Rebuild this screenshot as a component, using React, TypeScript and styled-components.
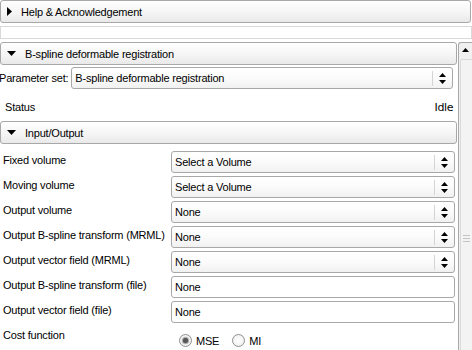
import React from 'react';
import styled, { createGlobalStyle } from 'styled-components';

const GlobalStyle = createGlobalStyle`
  html, body {
    margin: 0;
    padding: 0;
    background: #ffffff;
  }
  body {
    font-family: 'Liberation Sans', Arial, sans-serif;
    font-size: 11px;
    letter-spacing: -0.2px;
    color: #000000;
  }
`;

const Page = styled.div`
  width: 472px;
  height: 350px;
  overflow: hidden;
  background: #ffffff;
  display: flex;
  flex-direction: column;
`;

const CollapsibleButton = styled.div<{ $width?: number }>`
  box-sizing: border-box;
  width: ${(p) => (p.$width ? `${p.$width}px` : '100%')};
  height: 23px;
  border: 1px solid #a8a8a8;
  border-radius: 3px;
  background: linear-gradient(#ffffff, #f4f4f4 60%, #e9e9e9);
  display: flex;
  align-items: center;
  gap: 9px;
  padding-left: 6px;
  font-size: 11px;
`;

const EmptyStrip = styled.div`
  box-sizing: border-box;
  margin-top: 3px;
  width: 472px;
  height: 13px;
  border: 1px solid #d9d9d9;
  background: #ffffff;
`;

const Main = styled.div`
  margin-top: 3px;
  display: flex;
  flex: 1;
  min-height: 0;
`;

const Content = styled.div`
  width: 458px;
  display: flex;
  flex-direction: column;
`;

const Scrollbar = styled.div`
  box-sizing: border-box;
  width: 14px;
  border: 1px solid #a8a8a8;
  border-right: none;
  border-bottom: none;
  border-radius: 3px 0 0 0;
  background: #f0f0f0;
  display: flex;
  flex-direction: column;
`;

const ScrollButton = styled.div`
  height: 14px;
  display: flex;
  align-items: center;
  justify-content: center;
`;

const ScrollThumb = styled.div`
  flex: 1;
  margin: 2px 0 0 1px;
  border-left: 1px solid #dadada;
  border-top: 1px solid #dadada;
  border-radius: 2px 0 0 0;
  background: #f3f3f3;
  display: flex;
  justify-content: center;
  padding-top: 175px;
`;

const Grip = styled.div`
  width: 7px;
  height: 7px;
  background: repeating-linear-gradient(#c4c4c4 0 1px, transparent 1px 3px);
`;

const ParamRow = styled.div`
  margin-top: 2px;
  display: flex;
  align-items: center;
  gap: 3px;
`;

const ParamLabel = styled.span`
  margin-left: -1px;
  white-space: nowrap;
`;

const Combo = styled.div<{ $width: number }>`
  box-sizing: border-box;
  width: ${(p) => p.$width}px;
  height: 22px;
  border: 1px solid #a8a8a8;
  border-radius: 3px;
  background: linear-gradient(#ffffff, #fbfbfb 50%, #f1f1f1);
  display: flex;
  align-items: center;
  padding-left: 3px;
`;

const ComboText = styled.span`
  flex: 1;
  white-space: nowrap;
`;

const ComboButton = styled.div`
  width: 19px;
  height: 15px;
  border-left: 1px solid #d4d4d4;
  display: flex;
  align-items: center;
  justify-content: center;
`;

const LineEdit = styled.div`
  box-sizing: border-box;
  width: 284px;
  height: 22px;
  border: 1px solid #a8a8a8;
  border-radius: 3px;
  background: #ffffff;
  display: flex;
  align-items: center;
  padding-left: 3px;
`;

const StatusRow = styled.div`
  box-sizing: border-box;
  height: 32px;
  display: flex;
  align-items: center;
  justify-content: space-between;
  padding: 4px 5px 0 5px;
`;

const IdleText = styled.span`
  font-family: 'DejaVu Sans', sans-serif;
  font-size: 11px;
  letter-spacing: -0.4px;
`;

const Form = styled.div`
  margin-top: 7px;
  display: grid;
  grid-template-columns: 171px 284px;
  grid-auto-rows: 22px;
  row-gap: 3px;
  align-items: center;
`;

const FieldLabel = styled.span`
  padding-left: 3px;
  white-space: nowrap;
  align-self: start;
  margin-top: 3px;
`;

const RadioGroup = styled.div`
  display: flex;
  align-items: center;
  padding-left: 8px;
  margin-top: 7px;
  gap: 4px;
`;

const RadioLabel = styled.span`
  margin-right: 9px;
`;

const RadioCircle = styled.span<{ $checked?: boolean }>`
  box-sizing: border-box;
  width: 13px;
  height: 13px;
  border-radius: 50%;
  border: 1px solid #8f8f8f;
  background: radial-gradient(#ffffff, #ececec);
  display: flex;
  align-items: center;
  justify-content: center;
  &::after {
    content: '';
    display: ${(p) => (p.$checked ? 'block' : 'none')};
    width: 5px;
    height: 5px;
    border-radius: 50%;
    background: #555555;
    box-shadow: 0 0 1px 1px #9a9a9a;
  }
`;

const Arrow = ({ dir }: { dir: 'right' | 'down' | 'up' }) => {
  if (dir === 'right')
    return (
      <svg width="5" height="9" viewBox="0 0 5 9">
        <path d="M0 0 L5 4.5 L0 9 Z" fill="#000" />
      </svg>
    );
  if (dir === 'down')
    return (
      <svg width="9" height="5" viewBox="0 0 9 5">
        <path d="M0 0 L9 0 L4.5 5 Z" fill="#000" />
      </svg>
    );
  return (
    <svg width="7" height="4" viewBox="0 0 7 4">
      <path d="M0 4 L7 4 L3.5 0 Z" fill="#000" />
    </svg>
  );
};

const SpinArrows = () => (
  <svg width="7" height="11" viewBox="0 0 7 11">
    <path d="M0 4 L7 4 L3.5 0 Z" fill="#000" />
    <path d="M0 7 L7 7 L3.5 11 Z" fill="#000" />
  </svg>
);

const ComboBox = ({ text, width = 284 }: { text: string; width?: number }) => (
  <Combo $width={width}>
    <ComboText>{text}</ComboText>
    <ComboButton>
      <SpinArrows />
    </ComboButton>
  </Combo>
);

const fields: { label: string; value: string; kind: 'combo' | 'edit' }[] = [
  { label: 'Fixed volume', value: 'Select a Volume', kind: 'combo' },
  { label: 'Moving volume', value: 'Select a Volume', kind: 'combo' },
  { label: 'Output volume', value: 'None', kind: 'combo' },
  { label: 'Output B-spline transform (MRML)', value: 'None', kind: 'combo' },
  { label: 'Output vector field (MRML)', value: 'None', kind: 'combo' },
  { label: 'Output B-spline transform (file)', value: 'None', kind: 'edit' },
  { label: 'Output vector field (file)', value: 'None', kind: 'edit' },
];

const App: React.FC = () => (
  <Page>
    <GlobalStyle />
    <CollapsibleButton $width={471}>
      <Arrow dir="right" />
      Help &amp; Acknowledgement
    </CollapsibleButton>
    <EmptyStrip />
    <Main>
      <Content>
        <CollapsibleButton $width={457}>
          <Arrow dir="down" />
          B-spline deformable registration
        </CollapsibleButton>
        <ParamRow>
          <ParamLabel>Parameter set:</ParamLabel>
          <ComboBox text="B-spline deformable registration" width={382} />
        </ParamRow>
        <StatusRow>
          <span>Status</span>
          <IdleText>Idle</IdleText>
        </StatusRow>
        <CollapsibleButton $width={457}>
          <Arrow dir="down" />
          Input/Output
        </CollapsibleButton>
        <Form>
          {fields.map((f) => (
            <React.Fragment key={f.label}>
              <FieldLabel>{f.label}</FieldLabel>
              {f.kind === 'combo' ? <ComboBox text={f.value} /> : <LineEdit>{f.value}</LineEdit>}
            </React.Fragment>
          ))}
          <FieldLabel>Cost function</FieldLabel>
          <RadioGroup>
            <RadioCircle $checked />
            <RadioLabel>MSE</RadioLabel>
            <RadioCircle />
            <RadioLabel>MI</RadioLabel>
          </RadioGroup>
        </Form>
      </Content>
      <Scrollbar>
        <ScrollButton>
          <Arrow dir="up" />
        </ScrollButton>
        <ScrollThumb>
          <Grip />
        </ScrollThumb>
      </Scrollbar>
    </Main>
  </Page>
);

export default App;
